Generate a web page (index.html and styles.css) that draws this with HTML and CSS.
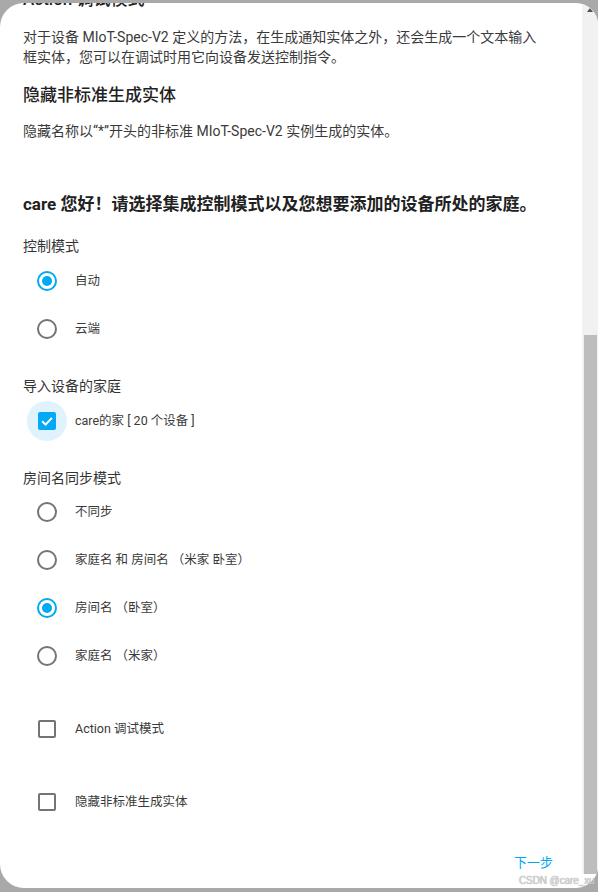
FILE: index.html
```html
<!DOCTYPE html>
<html lang="zh-CN">
<head>
<meta charset="utf-8">
<title>Xiaomi Home</title>
<link rel="stylesheet" href="styles.css">
</head>
<body>
<div class="card">
  <div class="main">
    <h3 class="sec-title first">Action 调试模式</h3>
    <p class="desc two">对于设备 MIoT-Spec-V2 定义的方法，在生成通知实体之外，还会生成一个文本输入框实体，您可以在调试时用它向设备发送控制指令。</p>
    <h3 class="sec-title second">隐藏非标准生成实体</h3>
    <p class="desc one">隐藏名称以“*”开头的非标准 MIoT-Spec-V2 实例生成的实体。</p>

    <h2 class="step-title">care 您好！请选择集成控制模式以及您想要添加的设备所处的家庭。</h2>

    <div class="field-label mode">控制模式</div>
    <div class="group tight">
      <div class="row"><span class="ctl"><span class="radio checked"></span></span><span class="lbl">自动</span></div>
      <div class="row"><span class="ctl"><span class="radio"></span></span><span class="lbl">云端</span></div>
    </div>

    <div class="field-label">导入设备的家庭</div>
    <div class="group tight">
      <div class="row"><span class="ctl halo"><span class="box checked"><svg viewBox="0 0 18 18" width="18" height="18"><path d="M4.2 9.3 L7.6 12.6 L13.9 5.9" fill="none" stroke="#fff" stroke-width="2"/></svg></span></span><span class="lbl">care的家 [ 20 个设备 ]</span></div>
    </div>

    <div class="field-label">房间名同步模式</div>
    <div class="group">
      <div class="row"><span class="ctl"><span class="radio"></span></span><span class="lbl">不同步</span></div>
      <div class="row"><span class="ctl"><span class="radio"></span></span><span class="lbl">家庭名 和 房间名 （米家 卧室）</span></div>
      <div class="row"><span class="ctl"><span class="radio checked"></span></span><span class="lbl">房间名 （卧室）</span></div>
      <div class="row"><span class="ctl"><span class="radio"></span></span><span class="lbl">家庭名 （米家）</span></div>
    </div>

    <div class="row spaced"><span class="ctl"><span class="box"></span></span><span class="lbl">Action 调试模式</span></div>
    <div class="row spaced"><span class="ctl"><span class="box"></span></span><span class="lbl">隐藏非标准生成实体</span></div>

    <div class="actions"><span class="btn">下一步</span></div>
  </div>
  <div class="scrollbar">
    <span class="arrow"></span>
    <span class="track-space"></span>
    <span class="thumb"></span>
  </div>
</div>
<div class="watermark">CSDN @care_xu</div>
</body>
</html>
```

FILE: styles.css
```css
html, body {
  margin: 0;
  padding: 0;
}
body {
  width: 598px;
  height: 892px;
  overflow: hidden;
  background: #a9a9a9;
  font-family: "Roboto", "Noto Sans CJK SC", sans-serif;
  color: #333;
  position: relative;
}
.card {
  margin-top: 3px;
  height: 885px;
  background: #fff;
  border-radius: 24px 22px 22px 24px;
  overflow: hidden;
  display: flex;
}
.main {
  flex: 1;
  min-width: 0;
  padding: 0 23px;
  display: flex;
  flex-direction: column;
}
.sec-title {
  margin: 16px 0 0;
  font-size: 17px;
  line-height: 24px;
  font-weight: 500;
  color: #212121;
}
.sec-title.first {
  margin-top: -16px;
}
.desc {
  margin: 16px 0 0;
  max-width: 522px;
  font-size: 14px;
  line-height: 20px;
  color: #3a3a3a;
}
.desc.one {
  margin-top: 14px;
}
.step-title {
  margin: 51px 0 0;
  font-size: 17px;
  line-height: 24px;
  font-weight: 700;
  color: #212121;
}
.field-label {
  margin-top: 23px;
  font-size: 14px;
  line-height: 20px;
  color: #333;
}
.field-label.mode {
  margin-top: 20px;
}
.group {
  display: flex;
  flex-direction: column;
}
.group.tight {
  margin-top: 1px;
}
.row {
  height: 48px;
  display: flex;
  align-items: center;
}
.row.spaced {
  margin-top: 25px;
}
.ctl {
  width: 48px;
  height: 48px;
  display: flex;
  align-items: center;
  justify-content: center;
  flex: none;
}
.ctl.halo {
  position: relative;
}
.ctl.halo::before {
  content: "";
  position: absolute;
  left: 4px;
  top: 4px;
  width: 40px;
  height: 40px;
  border-radius: 50%;
  background: #e0f3fc;
}
.lbl {
  margin-left: 4px;
  font-size: 12.5px;
  line-height: 18px;
  color: #3a3a3a;
}
.radio {
  width: 20px;
  height: 20px;
  box-sizing: border-box;
  border: 2px solid #747474;
  border-radius: 50%;
  display: flex;
  align-items: center;
  justify-content: center;
}
.radio.checked {
  border-color: #03a9f4;
}
.radio.checked::after {
  content: "";
  width: 10px;
  height: 10px;
  border-radius: 50%;
  background: #03a9f4;
}
.box {
  width: 18px;
  height: 18px;
  box-sizing: border-box;
  border: 2px solid #747474;
  border-radius: 2px;
  position: relative;
  display: flex;
}
.box.checked {
  border: none;
  background: #03a9f4;
}
.actions {
  margin-top: 17px;
  display: flex;
  justify-content: flex-end;
  margin-right: -2px;
}
.btn {
  height: 36px;
  padding: 0 8px;
  display: flex;
  align-items: center;
  font-size: 13px;
  color: #03a9f4;
}
.scrollbar {
  width: 16px;
  flex: none;
  background: #f1f1f1;
  margin-bottom: 14px;
  display: flex;
  flex-direction: column;
  align-items: center;
}
.arrow {
  margin-top: 5px;
  width: 0;
  height: 0;
  border-left: 3px solid transparent;
  border-right: 3px solid transparent;
  border-bottom: 4px solid #505050;
}
.track-space {
  height: 323px;
}
.thumb {
  flex: 1;
  width: 13px;
  margin-left: 1px;
  background: #bdbdbd;
}
.watermark {
  position: absolute;
  left: 519px;
  top: 875px;
  font-family: "Liberation Sans", Arial, sans-serif;
  font-size: 10px;
  letter-spacing: -0.1px;
  line-height: 12px;
  color: #d2d2d2;
  text-shadow: 0 0 1px #9a9a9a;
  white-space: nowrap;
}
```
